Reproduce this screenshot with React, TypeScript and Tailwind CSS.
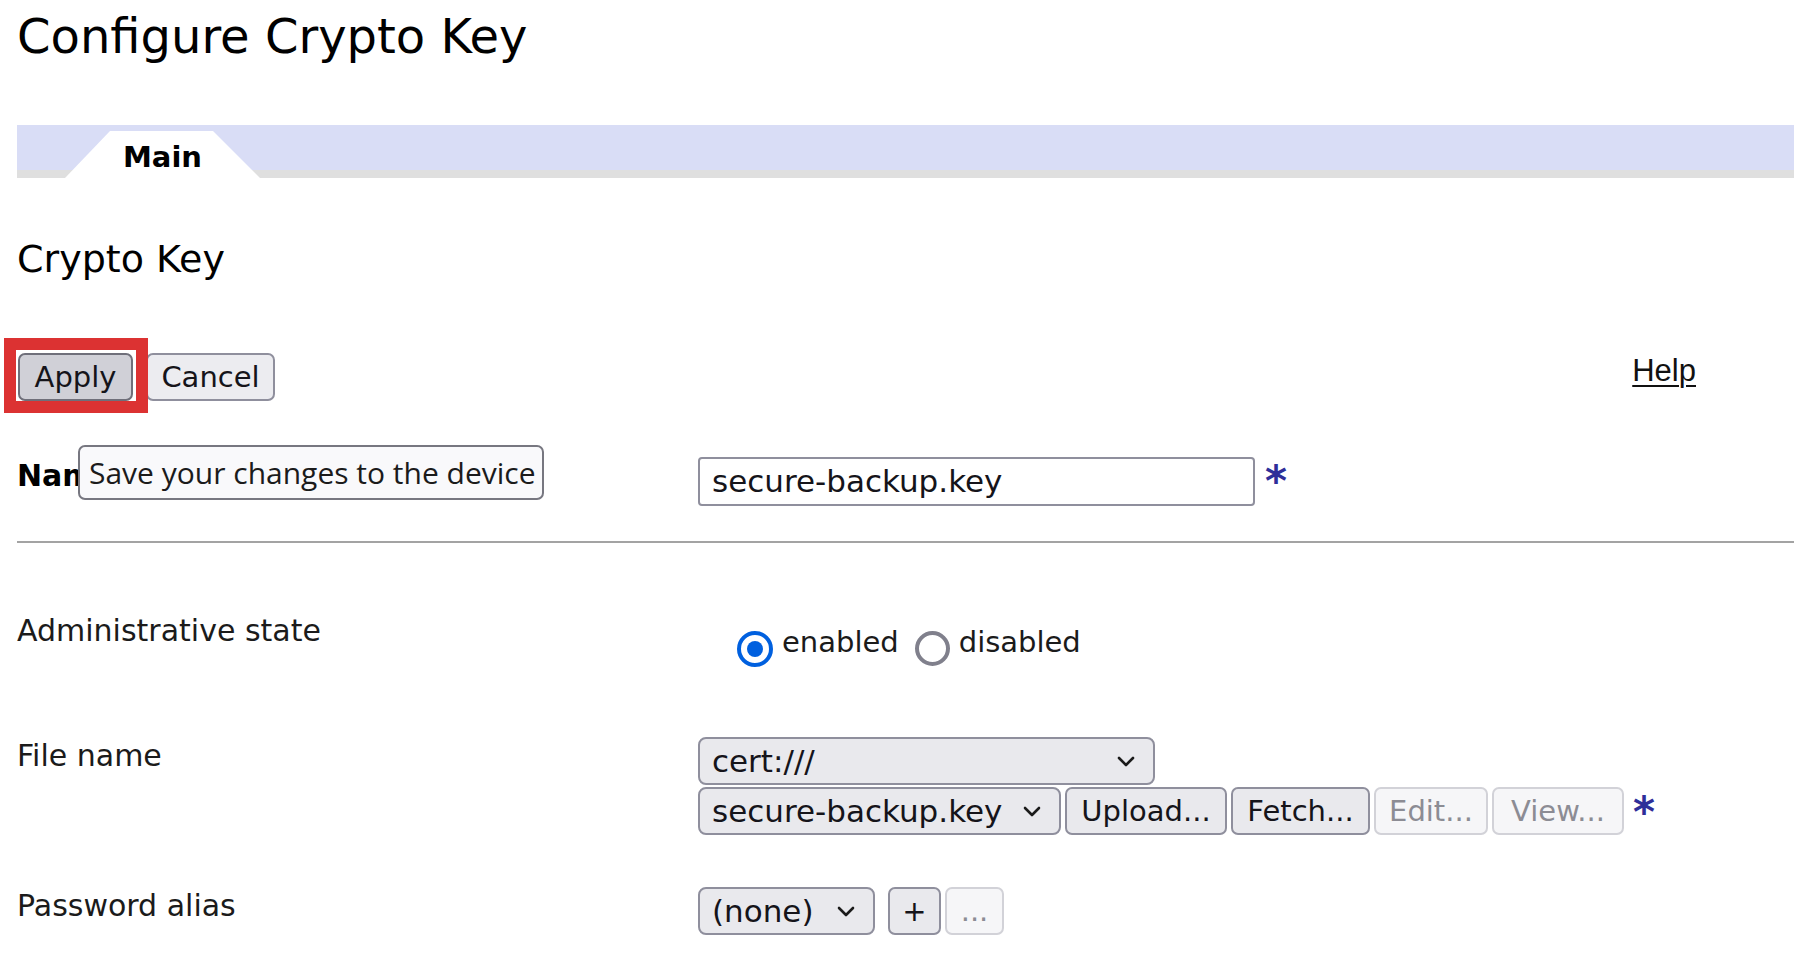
import React from "react";

const Chevron = () => (
  <svg width="18" height="11" viewBox="0 0 18 11" className="shrink-0">
    <path d="M2 2 L9 9 L16 2" fill="none" stroke="#1b1b1b" strokeWidth="2.6" strokeLinecap="round" strokeLinejoin="round" />
  </svg>
);

function Select({ w, text }: { w: string; text: string }) {
  return (
    <div
      className={`${w} h-[48px] shrink-0 box-border border-2 border-[#8f8f9d] rounded-[8px] bg-[#e9e9ed] flex items-center justify-between pl-[12px] pr-[18px] text-[31px] leading-[44px] text-[#15141a]`}
    >
      <span>{text}</span>
      <Chevron />
    </div>
  );
}

function Btn({ w, text, disabled = false }: { w: string; text: string; disabled?: boolean }) {
  return (
    <div
      className={`${w} h-[48px] shrink-0 box-border border-2 rounded-[7px] flex items-center justify-center text-[29px] leading-[44px] ${
        disabled
          ? "bg-[#f6f6f8] border-[#d2d2d8] text-[#8c8c94]"
          : "bg-[#e9e9ed] border-[#8f8f9d] text-[#15141a]"
      }`}
    >
      {text}
    </div>
  );
}

const Star = ({ cls }: { cls: string }) => (
  <span className={`font-bold text-[42px] leading-[44px] text-[#2e2e99] ${cls}`}>*</span>
);

export default function App() {
  return (
    <div className="w-[1802px] min-h-[970px] bg-white pl-[17px] pr-[8px] text-[#1b1b1b] font-['DejaVu_Sans',sans-serif]">
      <h1 className="pt-[12px] text-[48px] leading-[48px] font-normal text-black">Configure Crypto Key</h1>

      <div className="mt-[65px] h-[53px] flex items-end bg-[linear-gradient(to_bottom,#d9ddf6_45px,#dfdfdf_45px)]">
        <div className="ml-[48px] w-[195px] h-[47px] bg-white [clip-path:polygon(45px_0,148px_0,195px_100%,0_100%)] text-center font-bold text-[29px] leading-[29px] pt-[12px] text-black">
          Main
        </div>
      </div>

      <h2 className="mt-[61px] text-[38px] leading-[40px] font-normal text-black">Crypto Key</h2>

      <div className="mt-[74px] flex items-start justify-between">
        <div className="ml-[1px] flex gap-[13px]">
          <div className="relative">
            <div className="w-[115px] h-[48px] box-border border-2 border-[#6f6f7a] rounded-[7px] bg-[#d0d0d7] flex items-center justify-center text-[29px] leading-[44px] text-[#15141a]">
              Apply
            </div>
            <div className="absolute -left-[14px] -top-[15px] -right-[15px] -bottom-[12px] border-[12px] border-[#dc3232] pointer-events-none" />
          </div>
          <div className="w-[129px] h-[48px] box-border border-2 border-[#8f8f9d] rounded-[7px] bg-[#ececf0] flex items-center justify-center text-[29px] leading-[44px] text-[#15141a]">
            Cancel
          </div>
        </div>
        <a href="#" className="mr-[98px] mt-[3px] font-['Liberation_Sans',Arial,sans-serif] text-[31px] leading-[29px] text-[#111] underline decoration-2 underline-offset-[4px]">
          Help
        </a>
      </div>

      <div className="relative mt-[56px] grid grid-cols-[681px_1fr] items-start">
        <div className="font-bold text-[30px] leading-[38px] text-black">Name</div>
        <div className="flex items-start">
          <div className="w-[557px] h-[49px] box-border border-2 border-[#8f8f9d] rounded-[4px] bg-white pl-[12px] text-[31px] leading-[45px] text-[#15141a]">
            secure-backup.key
          </div>
          <Star cls="ml-[10px] mt-[3px]" />
        </div>
        <div className="absolute left-[61px] -top-[12px] w-[466px] h-[55px] box-border border-2 border-[#777780] rounded-[7px] bg-[#f9f9fb] pl-[9px] font-['Open_Sans',sans-serif] text-[30px] leading-[51px] text-[#1b1b1b] whitespace-nowrap">
          Save your changes to the device
        </div>
      </div>

      <div className="mt-[35px] h-[2px] bg-[#a3a3a3]" />

      <div className="mt-[69px] grid grid-cols-[681px_1fr] items-start">
        <div className="text-[30px] leading-[38px]">Administrative state</div>
        <div className="pt-[11px] flex items-start text-[29px] leading-[38px]">
          <div className="ml-[39px] mt-[8px] w-[36px] h-[36px] box-border rounded-full border-[4px] border-[#0060df] bg-white flex items-center justify-center">
            <div className="w-[16px] h-[16px] rounded-full bg-[#0060df]" />
          </div>
          <span className="ml-[9px]">enabled</span>
          <div className="ml-[16px] mt-[8px] w-[35px] h-[35px] box-border rounded-full border-[4px] border-[#80808c] bg-white" />
          <span className="ml-[9px]">disabled</span>
        </div>
      </div>

      <div className="mt-[70px] grid grid-cols-[681px_1fr] items-start">
        <div className="text-[30px] leading-[38px]">File name</div>
        <div className="flex flex-col gap-[2px]">
          <Select w="w-[457px]" text="cert:///" />
          <div className="flex items-start gap-[4px]">
            <Select w="w-[363px]" text="secure-backup.key" />
            <Btn w="w-[162px]" text="Upload..." />
            <Btn w="w-[139px]" text="Fetch..." />
            <Btn w="w-[114px]" text="Edit..." disabled />
            <Btn w="w-[132px]" text="View..." disabled />
            <Star cls="ml-[5px] mt-[4px]" />
          </div>
        </div>
      </div>

      <div className="mt-[52px] grid grid-cols-[681px_1fr] items-start">
        <div className="text-[30px] leading-[38px]">Password alias</div>
        <div className="flex items-start">
          <Select w="w-[177px]" text="(none)" />
          <div className="ml-[13px]">
            <Btn w="w-[53px]" text="+" />
          </div>
          <div className="ml-[4px]">
            <Btn w="w-[59px]" text="..." disabled />
          </div>
        </div>
      </div>
    </div>
  );
}
